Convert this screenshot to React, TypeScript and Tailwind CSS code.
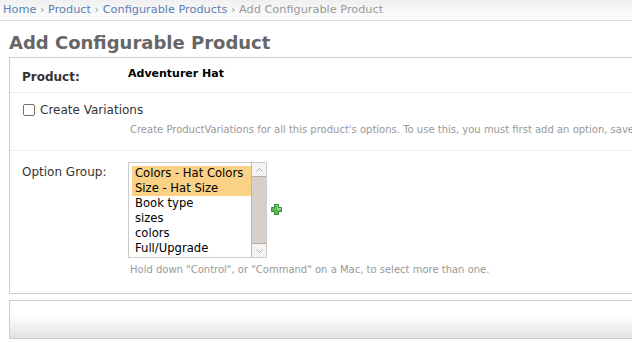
import React from 'react';

const options = [
  { label: 'Colors - Hat Colors', selected: true },
  { label: 'Size - Hat Size', selected: true },
  { label: 'Book type', selected: false },
  { label: 'sizes', selected: false },
  { label: 'colors', selected: false },
  { label: 'Full/Upgrade', selected: false },
];

function PlusIcon() {
  return (
    <svg width="11" height="11" viewBox="0 0 11 11">
      <path
        d="M3.5 0.5h4v3h3v4h-3v3h-4v-3h-3v-4h3z"
        fill="#5fb454"
        stroke="#3a8a32"
        strokeWidth="1"
      />
      <path d="M4.5 1.5h2v3h3v1h-3" fill="none" stroke="#9ad88f" strokeWidth="1" />
    </svg>
  );
}

export default function App() {
  return (
    <div
      className="w-[632px] h-[343px] overflow-hidden bg-white text-[#333]"
      style={{ fontFamily: '"DejaVu Sans", Verdana, sans-serif' }}
    >
      {/* Breadcrumbs */}
      <div className="h-[21px] px-[3px] pt-[3px] text-[11.3px] leading-[14px] bg-gradient-to-b from-[#f0f0f0] to-white border-b border-[#ddd] whitespace-nowrap">
        <a className="text-[#5b80b2]">Home</a>
        <span className="text-[#999]"> › </span>
        <a className="text-[#5b80b2]">Product</a>
        <span className="text-[#999]"> › </span>
        <a className="text-[#5b80b2]">Configurable Products</a>
        <span className="text-[#999]"> › Add Configurable Product</span>
      </div>

      <div className="pl-[9px]">
        <h1 className="pt-[11px] pb-[4px] text-[18px] leading-[21px] font-bold text-[#666] whitespace-nowrap">
          Add Configurable Product
        </h1>

        {/* Fieldset */}
        <div className="w-[700px] border border-[#ccc]">
          <div className="h-[35px] pl-[12px] flex items-start border-b border-[#eee]">
            <div className="w-[106px] pt-[12px] text-[12px] leading-[14px] font-bold text-[#333]">
              Product:
            </div>
            <div className="pt-[9px] text-[11px] leading-[14px] font-bold text-black">
              Adventurer Hat
            </div>
          </div>

          <div className="h-[58px] pl-[13px] pt-[10px] border-b border-[#eee]">
            <label className="flex items-center gap-[5px] text-[12px] leading-[14px] text-[#333]">
              <span className="w-[12px] h-[12px] border border-[#7a6f66] rounded-[2px] bg-white" />
              Create Variations
            </label>
            <p className="pl-[107px] pt-[6px] text-[10px] leading-[13px] text-[#999] whitespace-nowrap">
              Create ProductVariations for all this product's options. To use this, you must first add an option, save, and then come back.
            </p>
          </div>

          <div className="h-[142px] pl-[12px] pt-[11px] flex">
            <div className="w-[106px] pt-[3px] text-[12px] leading-[14px] text-[#333]">
              Option Group:
            </div>
            <div>
              <div className="flex items-center">
                <div className="w-[139px] h-[96px] border border-[#ccc] flex bg-white">
                  <div className="flex-1 pl-[3px] pt-[3px] text-[11.6px] leading-[15px] text-black">
                    {options.map((o) => (
                      <div
                        key={o.label}
                        className={`pl-[3px] whitespace-nowrap ${o.selected ? 'bg-[#fad185]' : ''}`}
                      >
                        {o.label}
                      </div>
                    ))}
                  </div>
                  <div className="w-[15px] flex flex-col bg-[#d7d0ca] border-l border-[#bdb6b0]">
                    <div className="h-[14px] bg-[#f5f3f1] border-b border-[#b5aea8] flex items-center justify-center">
                      <svg width="7" height="4" viewBox="0 0 7 4">
                        <path d="M0.5 3.5L3.5 0.5L6.5 3.5" fill="none" stroke="#aaa" />
                      </svg>
                    </div>
                    <div className="flex-1" />
                    <div className="h-[14px] bg-[#f5f3f1] border-t border-[#b5aea8] flex items-center justify-center">
                      <svg width="7" height="4" viewBox="0 0 7 4">
                        <path d="M0.5 0.5L3.5 3.5L6.5 0.5" fill="none" stroke="#aaa" />
                      </svg>
                    </div>
                  </div>
                </div>
                <div className="ml-[4px] -mt-[1px]">
                  <PlusIcon />
                </div>
              </div>
              <p className="pl-[2px] pt-[5px] text-[10px] leading-[13px] text-[#999] whitespace-nowrap">
                Hold down "Control", or "Command" on a Mac, to select more than one.
              </p>
            </div>
          </div>
        </div>

        {/* Submit row */}
        <div className="mt-[6px] w-[700px] h-[39px] border border-[#ccc] bg-gradient-to-b from-white from-40% to-[#e2e2e2]" />
      </div>
    </div>
  );
}
